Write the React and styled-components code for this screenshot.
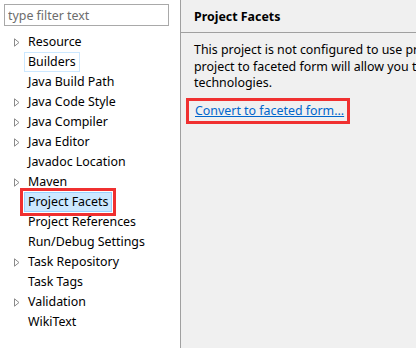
import React from 'react';
import styled, { createGlobalStyle } from 'styled-components';

const Global = createGlobalStyle`
  html, body {
    margin: 0;
    padding: 0;
    background: #f0f0f0;
  }
  body {
    font-family: "Noto Sans", "Open Sans", sans-serif;
    font-size: 12.4px;
    color: #000;
  }
`;

const items = [
  { label: 'Resource', arrow: true },
  { label: 'Builders', hover: true },
  { label: 'Java Build Path' },
  { label: 'Java Code Style', arrow: true },
  { label: 'Java Compiler', arrow: true },
  { label: 'Java Editor', arrow: true },
  { label: 'Javadoc Location' },
  { label: 'Maven', arrow: true },
  { label: 'Project Facets', selected: true },
  { label: 'Project References' },
  { label: 'Run/Debug Settings' },
  { label: 'Task Repository', arrow: true },
  { label: 'Task Tags' },
  { label: 'Validation', arrow: true },
  { label: 'WikiText' },
];

const Arrow = () => (
  <svg width="6" height="9" viewBox="0 0 6 9">
    <path d="M0.5 0.8 L5 4.5 L0.5 8.2 Z" fill="none" stroke="#8a8a8a" strokeWidth="1" />
  </svg>
);

export default function App() {
  return (
    <>
      <Global />
      <Window>
        <Sidebar>
          <Filter placeholder="type filter text" />
          <Tree>
            {items.map((it) => (
              <Row key={it.label}>
                <Toggle>{it.arrow && <Arrow />}</Toggle>
                <Label $hover={it.hover} $selected={it.selected}>
                  {it.label}
                </Label>
              </Row>
            ))}
          </Tree>
        </Sidebar>
        <Page>
          <Header>Project Facets</Header>
          <Body>
            <Line>This project is not configured to use project facets.</Line>
            <Line>project to faceted form will allow you to easily add</Line>
            <Line>technologies.</Line>
            <LinkBox>
              <Link href="#">Convert to faceted form...</Link>
            </LinkBox>
          </Body>
        </Page>
      </Window>
    </>
  );
}

const Window = styled.div`
  width: 416px;
  height: 348px;
  display: flex;
  overflow: hidden;
`;

const Sidebar = styled.div`
  width: 180px;
  flex-shrink: 0;
  background: #fff;
  border-right: 1px solid #a0a0a0;
  display: flex;
  flex-direction: column;
`;

const Filter = styled.input`
  margin: 4px 0 0 4px;
  width: 165px;
  height: 22px;
  box-sizing: border-box;
  border: 1px solid #a9a9a9;
  padding: 0 3px;
  font-family: inherit;
  font-size: 12.4px;
  outline: none;
  &::placeholder {
    color: #6d6d6d;
  }
`;

const Tree = styled.div`
  margin-top: 6px;
  display: flex;
  flex-direction: column;
`;

const Row = styled.div`
  height: 20px;
  display: flex;
  align-items: center;
`;

const Toggle = styled.span`
  width: 10px;
  padding-left: 14px;
  display: flex;
  align-items: center;
`;

const Label = styled.span`
  height: 20px;
  line-height: 18px;
  box-sizing: border-box;
  padding: 0 3px;
  border: 1px solid
    ${({ $hover, $selected }) => ($selected ? '#99d1ff' : $hover ? '#cce8ff' : 'transparent')};
  background: ${({ $selected }) => ($selected ? '#cce8ff' : 'transparent')};
  white-space: nowrap;
  ${({ $selected }) => $selected && 'outline: 3px solid #f03030; outline-offset: 1px;'}
`;

const Page = styled.div`
  flex: 1;
  min-width: 0;
  background: #f0f0f0;
  display: flex;
  flex-direction: column;
  overflow: hidden;
`;

const Header = styled.div`
  height: 33px;
  box-sizing: border-box;
  border-bottom: 1px solid #a0a0a0;
  padding-left: 13px;
  display: flex;
  align-items: center;
  font-weight: bold;
`;

const Body = styled.div`
  padding: 9px 0 0 13px;
  display: flex;
  flex-direction: column;
  align-items: flex-start;
`;

const Line = styled.div`
  line-height: 16.5px;
  white-space: nowrap;
`;

const LinkBox = styled.div`
  margin: 6px 0 0 -8px;
  padding: 1px 3px 2px 6px;
  border: 3px solid #f03030;
`;

const Link = styled.a`
  color: #0066cc;
  text-decoration: underline;
  line-height: 17px;
  white-space: nowrap;
`;
